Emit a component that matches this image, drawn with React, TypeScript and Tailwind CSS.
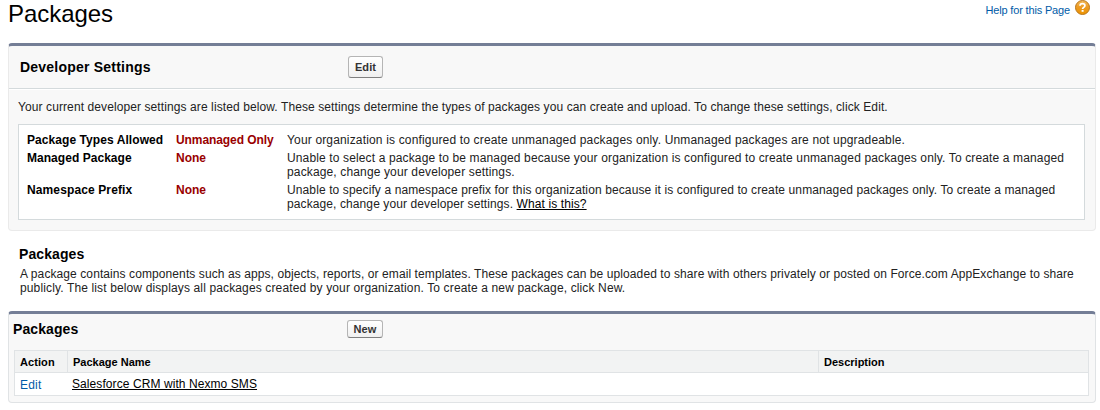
import React from "react";

const settings = [
  {
    label: "Package Types Allowed",
    labelTracking: "tracking-[0.07px]",
    value: "Unmanaged Only",
    valueTracking: "tracking-[-0.08px]",
    lines: [
      {
        text: "Your organization is configured to create unmanaged packages only. Unmanaged packages are not upgradeable.",
        tracking: "tracking-[0.16px]",
      },
    ],
    height: "h-[18px]",
  },
  {
    label: "Managed Package",
    labelTracking: "tracking-[0.04px]",
    value: "None",
    valueTracking: "tracking-normal",
    lines: [
      {
        text: "Unable to select a package to be managed because your organization is configured to create unmanaged packages only. To create a managed",
        tracking: "tracking-[0.136px]",
      },
      { text: "package, change your developer settings.", tracking: "tracking-[0.14px]" },
    ],
    height: "h-8",
  },
  {
    label: "Namespace Prefix",
    labelTracking: "tracking-[0.12px]",
    value: "None",
    valueTracking: "tracking-normal",
    lines: [
      {
        text: "Unable to specify a namespace prefix for this organization because it is configured to create unmanaged packages only. To create a managed",
        tracking: "tracking-[0.113px]",
      },
      { text: "package, change your developer settings. ", tracking: "tracking-[0.1px]" },
    ],
    link: "What is this?",
    height: "h-8",
  },
];

function HelpIcon() {
  return (
    <svg width="16" height="16" viewBox="0 0 16 16" aria-hidden="true">
      <defs>
        <linearGradient id="help" x1="0" y1="0" x2="0" y2="1">
          <stop offset="0" stopColor="#f3bb5c" />
          <stop offset="0.5" stopColor="#ec9a20" />
          <stop offset="1" stopColor="#ee9500" />
        </linearGradient>
      </defs>
      <circle cx="8.5" cy="7.5" r="7" fill="url(#help)" stroke="#b9761c" />
      <path d="M6 5.8c0-1.4 1-2.1 2.5-2.1s2.4.8 2.4 2c0 1.6-2.3 1.7-2.3 3.2" fill="none" stroke="#fff" strokeWidth="1.7" />
      <rect x="7.6" y="10" width="2" height="1.8" fill="#fff" />
    </svg>
  );
}

function Button({ children, className }: { children: React.ReactNode; className: string }) {
  return (
    <button
      className={`flex items-center justify-center rounded-[3px] border border-[#b5b5b5] border-b-[#7f7f7f] bg-gradient-to-b from-white to-[#f0f0f0] text-[11px] leading-none font-bold tracking-[0.1px] text-[#333] ${className}`}
    >
      {children}
    </button>
  );
}

export default function App() {
  return (
    <div className="h-[410px] w-[1100px] overflow-hidden bg-white pl-2 font-['Liberation_Sans',Arial,sans-serif] text-xs leading-[14px] text-[#222]">
      <header className="flex h-[43px] justify-between pr-[10px]">
        <h1 className="text-2xl leading-[27px] tracking-[-0.05px] text-black">Packages</h1>
        <a className="flex h-4 gap-1 text-[11px] leading-5 text-[#015ba7]">
          <span className="tracking-[-0.16px]">Help for this Page</span>
          <HelpIcon />
        </a>
      </header>

      <section className="h-[188px] w-[1088px] rounded-[4px] border border-t-[3px] border-[#eaeaea] border-t-[#747e96] bg-[#f8f8f8]">
        <div className="flex h-[43px] items-center border-b border-[#d4dadc] pl-[11px]">
          <h2 className="w-[328px] text-sm leading-4 font-bold tracking-[0.22px] text-black">Developer Settings</h2>
          <Button className="h-[22px] w-[35px]">Edit</Button>
        </div>
        <div className="border-t border-white px-[9px] pt-[10px]">
          <p className="tracking-[0.096px] whitespace-nowrap">
            Your current developer settings are listed below. These settings determine the types of packages you can create and upload. To change these settings, click Edit.
          </p>
          <div className="mt-[10px] h-24 w-[1067px] border border-[#d4dadc] bg-white pt-2 pl-2">
            {settings.map((s) => (
              <div key={s.label} className={`flex whitespace-nowrap ${s.height}`}>
                <div className={`w-[149px] font-bold text-black ${s.labelTracking}`}>{s.label}</div>
                <div className={`w-[111px] font-bold text-[#900] ${s.valueTracking}`}>{s.value}</div>
                <div>
                  {s.lines.map((line, i) => (
                    <div key={line.text} className={line.tracking}>
                      {line.text}
                      {i === 1 && s.link && <a className="text-black underline">{s.link}</a>}
                    </div>
                  ))}
                </div>
              </div>
            ))}
          </div>
        </div>
      </section>

      <div className="h-20 pt-[15px] pl-3 whitespace-nowrap">
        <h2 className="-ml-px text-sm leading-4 font-bold tracking-[0.08px] text-black">Packages</h2>
        <p className="mt-[5px]">
          <span className="tracking-[0.09px]">
            A package contains components such as apps, objects, reports, or email templates. These packages can be uploaded to share with others privately or posted on Force.com AppExchange to share
          </span>
          <br />
          <span className="tracking-[0.134px]">
            publicly. The list below displays all packages created by your organization. To create a new package, click New.
          </span>
        </p>
      </div>

      <section className="h-[92px] w-[1088px] rounded-[4px] border border-t-[3px] border-[#e0e3e5] border-t-[#747e96] bg-[#f8f8f8] pl-[5px]">
        <div className="flex h-[36px] pt-[6px]">
          <h2 className="-ml-px w-[334px] text-sm leading-[18px] font-bold tracking-[0.08px] text-black">Packages</h2>
          <Button className="h-[18px] w-9">New</Button>
        </div>
        <div className="w-[1075px] border border-[#e0e3e5] bg-white">
          <div className="flex h-[22px] border-b border-[#e0e3e5] bg-[#f2f3f3] text-[11px] leading-[22px] font-bold text-black">
            <div className="w-[53px] border-r border-[#e0e3e5] pl-[5px] tracking-[0.08px]">Action</div>
            <div className="w-[751px] border-r border-[#e0e3e5] pl-[5px]">Package Name</div>
            <div className="pl-[5px]">Description</div>
          </div>
          <div className="flex h-[22px] leading-[22px]">
            <a className="w-[57px] pl-[5px] leading-6 tracking-[0.2px] text-[#015ba7]">Edit</a>
            <a className="tracking-[0.08px] text-black underline">Salesforce CRM with Nexmo SMS</a>
          </div>
        </div>
      </section>
    </div>
  );
}
